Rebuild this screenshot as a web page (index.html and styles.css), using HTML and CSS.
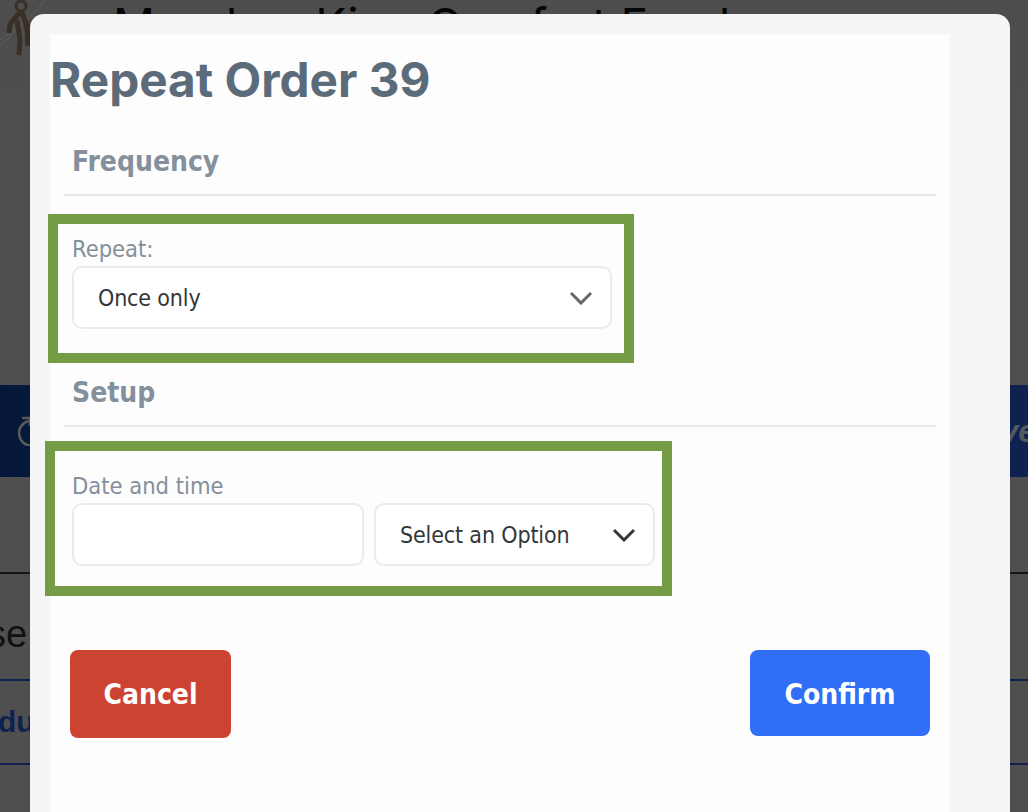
FILE: index.html
```html
<!DOCTYPE html>
<html lang="en">
<head>
<meta charset="utf-8">
<title>Repeat Order 39</title>
<link rel="stylesheet" href="styles.css">
</head>
<body>
<div class="page">
  <header class="shop-head">
    <svg class="shop-logo" width="60" height="60" viewBox="0 0 60 60" fill="none">
      <path d="M0 46 L46 0 M0 40 L16 28" stroke="#5b5853" stroke-width="1.2"/>
      <circle cx="21" cy="6" r="5" stroke="#3a2f25" stroke-width="3"/>
      <path d="M20 12 L10 24 L9 33 M22 12 L27 28 L28 46 M17 20 L20 40 L19 55 M25 20 L32 34" stroke="#3a2f25" stroke-width="5"/>
    </svg>
    <span class="shop-name">Meadow King Comfort Foods</span>
  </header>
  <nav class="band">
    <svg class="band-icon" width="28" height="30" viewBox="0 0 28 30" fill="none" stroke="#5a5a5a" stroke-width="2.5"><path d="M11 5 A12.5 12.5 0 1 0 26 17 M4 2 H12 V10"/></svg>
    <span class="band-text">ve</span>
  </nav>
  <div class="rule-dark"></div>
  <div class="sub-text">se</div>
  <div class="product-row"><span>du</span></div>
</div>
<div class="overlay">
  <div class="modal">
    <div class="sheet">
      <h1 class="title">Repeat Order 39</h1>
      <section class="section">
        <h2 class="section-title first">Frequency</h2>
        <div class="box box-repeat">
          <label class="field-label">Repeat:</label>
          <div class="select select-wide">
            <span>Once only</span>
            <svg width="24" height="14" viewBox="0 0 24 14" fill="none" stroke="#666" stroke-width="3"><path d="M2 2 L12 12 L22 2"/></svg>
          </div>
        </div>
      </section>
      <section class="section">
        <h2 class="section-title second">Setup</h2>
        <div class="box box-date">
          <label class="field-label">Date and time</label>
          <div class="date-row">
            <div class="input"></div>
            <div class="select select-time">
              <span>Select an Option</span>
              <svg width="24" height="14" viewBox="0 0 24 14" fill="none" stroke="#33363b" stroke-width="3"><path d="M2 2 L12 12 L22 2"/></svg>
            </div>
          </div>
        </div>
      </section>
      <div class="actions">
        <button class="btn btn-cancel">Cancel</button>
        <button class="btn btn-confirm">Confirm</button>
      </div>
    </div>
  </div>
</div>
</body>
</html>
```
FILE: styles.css
```css
* { box-sizing: border-box; }
html, body { margin: 0; height: 100%; overflow: hidden; }
body { font-family: "DejaVu Sans Condensed", "DejaVu Sans", sans-serif; background: #4f4f4f; }
.page { height: 812px; overflow: hidden; }
.shop-head { height: 385px; display: flex; align-items: flex-start; background: linear-gradient(#4d4d4d 0, #4d4d4d 86px, #4f4f4f 86px); }
.shop-logo { flex: none; }
.shop-name { margin-left: 53px; margin-top: -5px; font: 400 46.5px/60px Inter, sans-serif; color: #050505; white-space: nowrap; }
.band { height: 92px; background: linear-gradient(90deg, #06183a, #0f2150); display: flex; justify-content: space-between; align-items: center; padding-left: 18px; overflow: hidden; }
.band-text { font: italic 700 32px "Liberation Sans", sans-serif; color: #55585f; margin-right: -8px; }
.rule-dark { height: 2px; background: #141414; margin-top: 95px; }
.sub-text { font: 400 38px/40px "Liberation Sans", sans-serif; color: #111; margin-top: 40px; margin-left: -13px; }
.product-row { height: 86px; margin-top: 25px; margin-left: -2px; border-top: 2px solid #0f2150; border-bottom: 2px solid #0f2150; display: flex; align-items: center; font: 700 30px "Liberation Sans", sans-serif; color: #0f2150; }
.overlay { position: fixed; inset: 0; padding: 14px 18px 0 30px; }
.modal { height: 830px; background: #f5f5f5; border-radius: 14px 14px 0 0; padding: 20px 60px 0 20px; }
.sheet { height: 100%; background: #fdfdfd; display: flex; flex-direction: column; }
.title { margin: 0; padding-top: 18px; height: 75px; font: 700 47.7px/56px Inter, sans-serif; color: #5c6b7a; }
.section { margin: 0 14px; }
.section-title { margin: 0; padding: 0 0 0 8px; font-size: 28px; line-height: 40px; font-weight: 700; color: #84909c; border-bottom: 2px solid #e8e8e8; }
.section-title.first { margin-top: 29px; padding-top: 4px; height: 58px; }
.section-title.second { margin-top: 10px; height: 54px; }
.box { border: 10px solid #739c45; display: flex; flex-direction: column; }
.box-repeat { width: 586px; height: 149px; margin: 18px 0 0 -16px; padding: 10px 12px 0 14px; }
.box-date { width: 627px; height: 155px; margin: 14px 0 0 -19px; padding: 20px 7px 0 17px; }
.field-label { font-size: 23.5px; line-height: 30px; color: #84909c; }
.select, .input { background: #fff; border: 2px solid #ebebeb; border-radius: 10px; height: 63px; }
.select { display: flex; align-items: center; justify-content: space-between; font-size: 23px; letter-spacing: -0.15px; color: #33363b; }
.select-wide { padding: 0 17px 0 24px; margin-top: 2px; }
.date-row { display: flex; gap: 10px; margin-top: 2px; }
.input { width: 292px; flex: none; }
.select-time { width: 281px; flex: none; padding: 0 17px 0 24px; }
.actions { display: flex; justify-content: space-between; align-items: flex-start; margin: 54px 20px 0; }
.btn { border: 0; border-radius: 8px; color: #fff; font: 700 28px "DejaVu Sans Condensed", "DejaVu Sans", sans-serif; padding: 0; }
.btn-cancel { width: 161px; height: 88px; background: #cc4332; }
.btn-confirm { width: 180px; height: 86px; padding-top: 2px; background: #306ef6; }
```
